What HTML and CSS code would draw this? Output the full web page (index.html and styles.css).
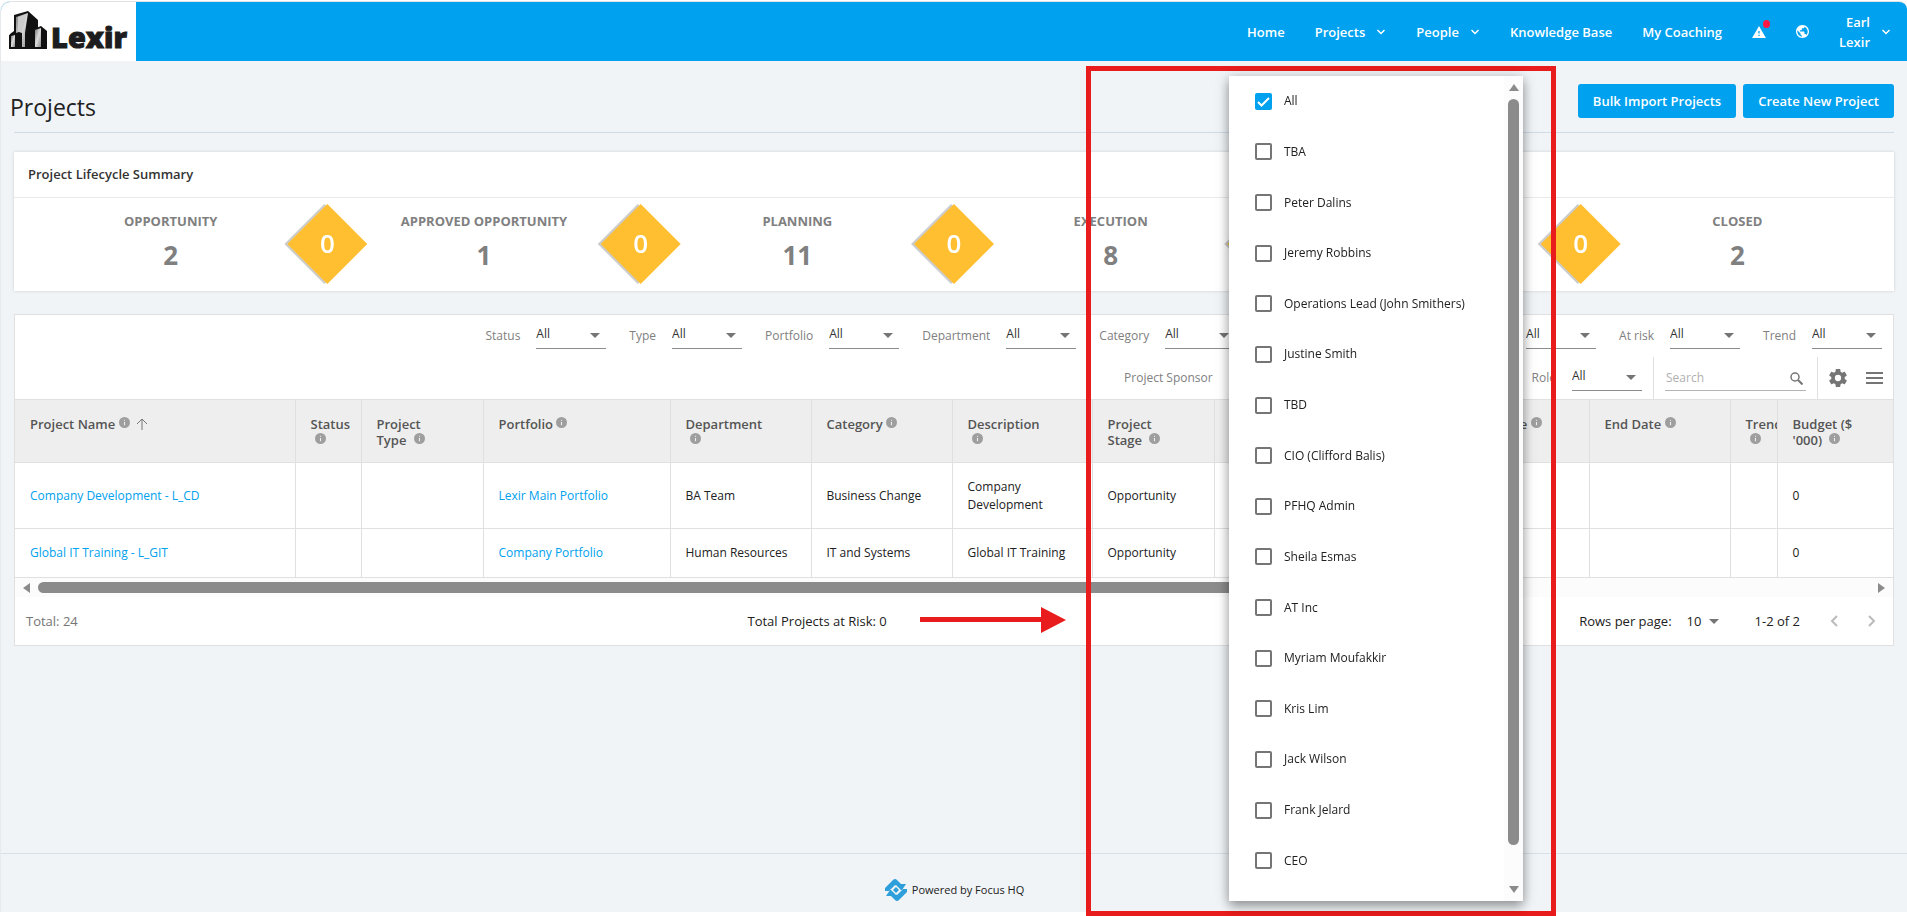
FILE: index.html
```html
<!DOCTYPE html>
<html lang="en">

<head>
  <title>Projects</title>
  <meta charset="utf-8" />
  <link rel="stylesheet" href="styles.css">
</head>

<body>
<svg class="sprite" aria-hidden="true">
  <symbol id="info" viewBox="2 2 20 20">
    <path d="M12 2a10 10 0 1 0 0 20 10 10 0 0 0 0-20zm1 15h-2v-6h2v6zm0-8h-2V7h2v2z" />
  </symbol>
  <symbol id="chevron" viewBox="0 0 10 10">
    <path d="M1.500 3l3.500 3.500L8.500 3" fill="none" stroke="currentColor" stroke-width="1.500" />
  </symbol>
</svg>

<div class="page">
  <header class="topbar">
    <a href="#" class="logo" aria-label="Lexir">
      <svg width="136" height="59" viewBox="0 0 136 59">
        <defs>
          <linearGradient id="steel" x1="0" y1="0" x2="1" y2="1">
            <stop offset="0" stop-color="#777" />
            <stop offset="0.5" stop-color="#ddd" />
            <stop offset="1" stop-color="#888" />
          </linearGradient>
        </defs>
        <path d="M13 13l14-4 10 9v29H9V32l4-3z" fill="#111" />
        <path d="M15 15l12-4-3 20v14h-3V31l-3-1-3 1z" fill="url(#steel)" />
        <path d="M17 15l9-3-5 18-4-1z" fill="#ccc" />
        <path d="M8 33l5-2 3 2v14H8z" fill="#111" />
        <path d="M10 34l4-1v12h-4z" fill="url(#steel)" />
        <path d="M33 27l7-3 6 5v18H33z" fill="#111" />
        <path d="M34 28l6-2v19h-6z" fill="url(#steel)" />
        <text x="50" y="46" class="logo-text">Lexir</text>
      </svg>
    </a>
    <nav class="nav">
      <a href="#">Home</a>
      <a href="#">Projects <svg class="chevron"><use href="#chevron" /></svg></a>
      <a href="#">People <svg class="chevron"><use href="#chevron" /></svg></a>
      <a href="#">Knowledge Base</a>
      <a href="#">My Coaching</a>
      <button class="icon-btn" aria-label="Alerts">
        <svg width="14" height="12" viewBox="1 2 22 19"><path d="M1 21h22L12 2 1 21zm12-3h-2v-2h2v2zm0-4h-2v-4h2v4z" fill="#fff" /></svg>
        <span class="dot"></span>
      </button>
      <button class="icon-btn" aria-label="Language">
        <svg width="13" height="13" viewBox="2 2 20 20"><path d="M12 2C6.480 2 2 6.480 2 12s4.480 10 10 10 10-4.480 10-10S17.520 2 12 2zm-1 17.930c-3.950-.49-7-3.850-7-7.930 0-.62.080-1.210.21-1.790L9 15v1c0 1.100.9 2 2 2v1.930zm6.900-2.540c-.26-.81-1-1.390-1.900-1.390h-1v-3c0-.55-.45-1-1-1H8v-2h2c.55 0 1-.45 1-1V7h2c1.100 0 2-.9 2-2v-.41c2.930 1.190 5 4.060 5 7.410 0 2.080-.8 3.970-2.100 5.390z" fill="#fff" /></svg>
      </button>
      <a href="#" class="user"><span>Earl<br>Lexir</span> <svg class="chevron"><use href="#chevron" /></svg></a>
    </nav>
  </header>

  <main>
    <div class="heading">
      <h1>Projects</h1>
      <div class="actions">
        <button>Bulk Import Projects</button>
        <button>Create New Project</button>
      </div>
    </div>

    <section class="summary">
      <h2>Project Lifecycle Summary</h2>
      <ul class="stages">
        <li><h3>OPPORTUNITY</h3><strong>2</strong><span class="gate"><b>0</b></span></li>
        <li><h3>APPROVED OPPORTUNITY</h3><strong>1</strong><span class="gate"><b>0</b></span></li>
        <li><h3>PLANNING</h3><strong>11</strong><span class="gate"><b>0</b></span></li>
        <li><h3>EXECUTION</h3><strong>8</strong><span class="gate"><b>0</b></span></li>
        <li><h3>CLOSING</h3><strong>1</strong><span class="gate"><b>0</b></span></li>
        <li><h3>CLOSED</h3><strong>2</strong></li>
      </ul>
    </section>

    <section class="grid">
      <div class="filters">
        <label>Status <select><option>All</option></select></label>
        <label>Type <select><option>All</option></select></label>
        <label>Portfolio <select><option>All</option></select></label>
        <label>Department <select><option>All</option></select></label>
        <label>Category <select><option>All</option></select></label>
        <label>Project Stage <select><option>All</option></select></label>
        <label>Budget Type <select><option>All</option></select></label>
        <label>At risk <select><option>All</option></select></label>
        <label>Trend <select><option>All</option></select></label>
      </div>
      <div class="filters tools">
        <label>Project Sponsor <select><option>All</option></select></label>
        <label>Portfolio Manager <select><option>All</option></select></label>
        <label>Role <select><option>All</option></select></label>
        <div class="search">
          <input type="text" placeholder="Search" aria-label="Search">
          <svg width="13" height="13" viewBox="0 0 13 13"><g fill="none" stroke="#757575"><circle cx="5" cy="5" r="4" stroke-width="1.500" /><path d="M8 8l4.500 4.500" stroke-width="2" /></g></svg>
        </div>
        <div class="tool-buttons">
          <button aria-label="Settings">
            <svg width="18" height="18" viewBox="2 2 20 20"><path fill="#757575" d="M19.430 12.980c.04-.32.070-.64.070-.98s-.03-.66-.07-.98l2.110-1.650c.19-.15.240-.42.120-.64l-2-3.460c-.12-.22-.39-.3-.61-.22l-2.490 1c-.52-.4-1.080-.73-1.690-.98l-.38-2.650C14.460 2.180 14.250 2 14 2h-4c-.25 0-.46.180-.49.420l-.38 2.650c-.61.250-1.170.590-1.690.980l-2.490-1c-.23-.09-.49 0-.61.220l-2 3.460c-.13.220-.07.490.120.640l2.110 1.650c-.04.320-.07.650-.07.980s.03.660.070.980l-2.110 1.650c-.19.150-.24.420-.12.640l2 3.460c.12.220.39.300.61.220l2.490-1c.52.400 1.080.730 1.690.980l.38 2.650c.03.240.24.420.49.420h4c.25 0 .46-.18.490-.42l.38-2.650c.61-.25 1.170-.59 1.690-.98l2.490 1c.23.090.49 0 .61-.22l2-3.460c.12-.22.070-.49-.12-.64l-2.110-1.650zM12 15.500a3.500 3.500 0 1 1 0-7 3.500 3.500 0 0 1 0 7z" /></svg>
          </button>
          <button aria-label="Menu">
            <svg width="17" height="12" viewBox="0 0 17 12"><path d="M0 1h17M0 6h17M0 11h17" stroke="#757575" stroke-width="2" /></svg>
          </button>
        </div>
      </div>

      <table>
        <colgroup>
          <col class="w280"><col class="w66"><col class="w122"><col class="w187"><col class="w141"><col class="w141">
          <col class="w140"><col class="w122"><col><col class="w141"><col class="w141"><col class="w47"><col class="w116">
        </colgroup>
        <thead>
          <tr>
            <th>Project Name <svg class="info"><use href="#info" /></svg> <svg class="sort" viewBox="0 0 12 12"><path d="M6 12V1M1 6l5-5 5 5" /></svg></th>
            <th>Status<br><svg class="info"><use href="#info" /></svg></th>
            <th>Project<br>Type <svg class="info"><use href="#info" /></svg></th>
            <th>Portfolio <svg class="info"><use href="#info" /></svg></th>
            <th>Department<br><svg class="info"><use href="#info" /></svg></th>
            <th>Category <svg class="info"><use href="#info" /></svg></th>
            <th>Description<br><svg class="info"><use href="#info" /></svg></th>
            <th>Project<br>Stage <svg class="info"><use href="#info" /></svg></th>
            <th></th>
            <th>Start Date <svg class="info"><use href="#info" /></svg></th>
            <th>End Date <svg class="info"><use href="#info" /></svg></th>
            <th>Trend<br><svg class="info"><use href="#info" /></svg></th>
            <th>Budget ($<br>'000) <svg class="info"><use href="#info" /></svg></th>
          </tr>
        </thead>
        <tbody>
          <tr>
            <td><a href="#">Company Development - L_CD</a></td><td></td><td></td>
            <td><a href="#">Lexir Main Portfolio</a></td>
            <td>BA Team</td><td>Business Change</td><td>Company Development</td><td>Opportunity</td>
            <td></td><td></td><td></td><td></td><td>0</td>
          </tr>
          <tr>
            <td><a href="#">Global IT Training - L_GIT</a></td><td></td><td></td>
            <td><a href="#">Company Portfolio</a></td>
            <td>Human Resources</td><td>IT and Systems</td><td>Global IT Training</td><td>Opportunity</td>
            <td></td><td></td><td></td><td></td><td>0</td>
          </tr>
        </tbody>
      </table>

      <div class="hscroll">
        <span class="arrow-left"></span>
        <div class="htrack"><div class="hthumb"></div></div>
        <span class="arrow-right"></span>
      </div>

      <div class="grid-footer">
        <span class="total">Total: 24</span>
        <span class="risk">Total Projects at Risk: 0</span>
        <div class="pager">
          <label>Rows per page: <select><option>10</option></select></label>
          <span>1-2 of 2</span>
          <button aria-label="Previous page"><svg width="8" height="12" viewBox="0 0 8 12"><path d="M7 1L2 6l5 5" /></svg></button>
          <button aria-label="Next page"><svg width="8" height="12" viewBox="0 0 8 12"><path d="M1 1l5 5-5 5" /></svg></button>
        </div>
      </div>
    </section>
  </main>

  <footer class="footer">
    <svg width="24" height="24" viewBox="0 0 24 24">
      <path d="M1 13v-3l8-8q2-2 4 0l4 4h5l-4 6h-3l-4-5-6 6z" fill="#2f9fdc" />
      <path d="M23 11v3l-8 8q-2 2-4 0l-4-4H2l4-6h3l4 5 6-6z" fill="#2f9fdc" />
      <path d="M12 7l5 5-5 5-5-5z" fill="#f0f4f7" />
      <path d="M12 9l3 3-3 3-3-3z" fill="#2f9fdc" />
    </svg>
    <span>Powered by Focus HQ</span>
  </footer>
</div>

<!-- open sponsor drop-down -->
<div class="menu">
  <div class="options">
    <label><input type="checkbox" checked> All</label>
    <label><input type="checkbox"> TBA</label>
    <label><input type="checkbox"> Peter Dalins</label>
    <label><input type="checkbox"> Jeremy Robbins</label>
    <label><input type="checkbox"> Operations Lead (John Smithers)</label>
    <label><input type="checkbox"> Justine Smith</label>
    <label><input type="checkbox"> TBD</label>
    <label><input type="checkbox"> CIO (Clifford Balis)</label>
    <label><input type="checkbox"> PFHQ Admin</label>
    <label><input type="checkbox"> Sheila Esmas</label>
    <label><input type="checkbox"> AT Inc</label>
    <label><input type="checkbox"> Myriam Moufakkir</label>
    <label><input type="checkbox"> Kris Lim</label>
    <label><input type="checkbox"> Jack Wilson</label>
    <label><input type="checkbox"> Frank Jelard</label>
    <label><input type="checkbox"> CEO</label>
  </div>
  <div class="vscroll">
    <span class="arrow-up"></span>
    <div class="vthumb"></div>
    <span class="arrow-down"></span>
  </div>
</div>

<!-- annotations -->
<div class="mark"></div>
<svg class="mark-arrow" width="146" height="26" viewBox="0 0 146 26"><path d="M0 10h121V0l25 13-25 13V15H0z" fill="#e81c1c" /></svg>
</body>

</html>
```

FILE: styles.css
```css
* {
  margin: 0;
  padding: 0;
  box-sizing: border-box;
}

body {
  background: #fff;
  font: 12px/18px "Open Sans", "Noto Sans", sans-serif;
  color: #212121;
}

a {
  color: #00a1ee;
  text-decoration: none;
}

button,
input,
select {
  font: inherit;
  color: inherit;
  border: 0;
  background: none;
}

ul {
  list-style: none;
}

.sprite {
  position: absolute;
  width: 0;
  height: 0;
}

.page {
  display: flex;
  flex-direction: column;
  min-height: calc(100vh - 5px);
  margin-top: 1px;
  border-top: 1px solid #dfe3e6;
  border-left: 1px solid #e6eaed;
  border-radius: 10px 8px 0 0;
  background: #f0f4f7;
  overflow: hidden;
}

/* top bar */
.topbar {
  display: flex;
  justify-content: space-between;
  height: 59px;
  background: #00a1ee;
}

.logo {
  width: 135px;
  background: #fff;
}

.logo-text {
  font-size: 29px;
  font-weight: 800;
  fill: #1d1d20;
  stroke: #1d1d20;
  stroke-width: 1px;
}

.nav {
  display: flex;
  align-items: center;
  gap: 30px;
  padding-right: 16px;
  font-size: 13px;
  line-height: 20px;
  font-weight: 600;
}

.nav a {
  display: flex;
  align-items: center;
  gap: 11px;
  color: #fff;
}

.chevron {
  width: 10px;
  height: 10px;
}

.icon-btn {
  position: relative;
  display: flex;
}

.dot {
  position: absolute;
  top: -6px;
  right: -4px;
  width: 7px;
  height: 8px;
  border-radius: 50%;
  background: #ff1744;
}

.nav .user {
  text-align: right;
}

/* page heading */
main {
  flex: 1;
  padding: 0 13px;
}

.heading {
  display: flex;
  justify-content: space-between;
  height: 72px;
  padding-top: 23px;
  border-bottom: 1px solid #cfdce7;
}

.heading h1 {
  margin-left: -4px;
  font-size: 23px;
  line-height: 46px;
  font-weight: 400;
}

.actions {
  display: flex;
  align-items: flex-start;
  gap: 7px;
}

.actions button {
  height: 34px;
  padding: 0 15px;
  border-radius: 3px;
  background: #00a1ee;
  color: #fff;
  font-size: 13px;
  font-weight: 600;
}

/* lifecycle summary */
.summary {
  margin-top: 19px;
  background: #fff;
  box-shadow: 0 0 3px rgba(0, 0, 0, 0.15);
}

.summary h2 {
  padding: 0 14px;
  border-bottom: 1px solid #e8eaec;
  font-size: 13px;
  line-height: 45px;
  font-weight: 600;
  color: #333;
}

.stages {
  display: grid;
  grid-template-columns: repeat(6, 1fr);
  height: 93px;
}

.stages li {
  position: relative;
  padding-top: 13px;
  text-align: center;
  color: #808080;
}

.stages h3 {
  font-size: 13px;
  line-height: 20px;
  font-weight: 700;
}

.stages strong {
  display: block;
  font-size: 26px;
  line-height: 48px;
}

.gate {
  position: absolute;
  top: 6px;
  right: -40px;
  z-index: 1;
  width: 80px;
  height: 80px;
  filter: drop-shadow(-3px 0 0 #ccc);
}

.gate b {
  display: block;
  clip-path: polygon(50% 0, 100% 50%, 50% 100%, 0 50%);
  background: #ffbf30;
  color: #fff;
  font-size: 26px;
  line-height: 78px;
  height: 80px;
  font-weight: 600;
}

/* project grid */
.grid {
  margin-top: 23px;
  border: 1px solid #e0e0e0;
  background: #fff;
}

.filters {
  display: flex;
  justify-content: flex-end;
  align-items: center;
  gap: 23px;
  height: 42px;
  padding-right: 11px;
  color: #808080;
}

.filters label {
  display: flex;
  align-items: center;
  gap: 16px;
  white-space: nowrap;
}

select {
  appearance: none;
  background: url("data:image/svg+xml,%3Csvg xmlns='http://www.w3.org/2000/svg' width='10' height='5'%3E%3Cpath d='M0 0h10L5 5z' fill='%23757575'/%3E%3C/svg%3E") no-repeat right 6px center;
}

.filters select {
  width: 70px;
  height: 26px;
  padding-bottom: 3px;
  border-bottom: 1px solid #8c8c8c;
  color: #333;
}

.tools {
  padding-right: 10px;
}

.search,
.tool-buttons {
  display: flex;
  align-items: center;
  height: 42px;
  border-left: 1px solid #e0e0e0;
}

.search {
  margin-left: -12px;
  padding-left: 11px;
}

.search input {
  width: 141px;
  height: 26px;
  padding: 0 30px 0 1px;
  border-bottom: 1px solid #b5b5b5;
}

.search input::placeholder {
  color: #b0b0b0;
}

.search svg {
  margin-left: -16px;
  margin-right: 3px;
}

.tool-buttons {
  gap: 19px;
  margin-left: -12px;
  padding-left: 11px;
}

.tool-buttons button {
  display: flex;
}

table {
  width: 100%;
  table-layout: fixed;
  border-collapse: collapse;
}

.w280 { width: 280px; }
.w187 { width: 187px; }
.w141 { width: 141px; }
.w140 { width: 140px; }
.w122 { width: 122px; }
.w116 { width: 116px; }
.w66 { width: 66px; }
.w47 { width: 47px; }

th,
td {
  padding: 0 0 0 15px;
  border: 1px solid #e0e0e0;
  text-align: left;
  overflow: hidden;
}

th:first-child,
td:first-child {
  border-left: 0;
}

th:last-child,
td:last-child {
  border-right: 0;
}

th {
  height: 63px;
  padding-top: 16px;
  background: #eee;
  font-size: 13px;
  font-weight: 600;
  line-height: 16px;
  vertical-align: top;
  color: #555;
}

td {
  height: 49px;
  padding-right: 12px;
}

tbody tr:first-child td {
  height: 66px;
}

.info {
  width: 11px;
  height: 11px;
  vertical-align: 1px;
  fill: #9e9e9e;
}

br + .info {
  margin-left: 4px;
}

.sort {
  width: 12px;
  height: 12px;
  margin-left: 3px;
  vertical-align: -1px;
  fill: none;
  stroke: #757575;
}

.hscroll {
  display: flex;
  align-items: center;
  gap: 8px;
  height: 19px;
  padding: 0 8px;
  background: #fcfcfc;
}

.htrack {
  flex: 1;
}

.hthumb {
  width: 75%;
  height: 11px;
  border-radius: 6px;
  background: #8b8b8b;
}

.arrow-left,
.arrow-right {
  border: 5px solid transparent;
}

.arrow-left {
  border-left: 0;
  border-right: 7px solid #8b8b8b;
}

.arrow-right {
  border-right: 0;
  border-left: 7px solid #8b8b8b;
}

.grid-footer {
  display: flex;
  align-items: center;
  height: 48px;
  padding: 0 17px 0 11px;
  font-size: 13px;
}

.grid-footer span {
  white-space: nowrap;
}

.total {
  width: 39%;
  color: #757575;
}

.pager {
  display: flex;
  align-items: center;
  margin-left: auto;
}

.pager label {
  display: flex;
  gap: 15px;
}

.pager select {
  width: 32px;
  margin-right: 36px;
  background-position: right center;
}

.pager button {
  display: flex;
  margin-left: 30px;
  fill: none;
  stroke: #bbb;
  stroke-width: 2;
}

/* page footer */
.footer {
  display: flex;
  justify-content: center;
  align-items: center;
  gap: 4px;
  height: 59px;
  padding-top: 14px;
  border-top: 1px solid #d7e1ea;
  font-size: 11px;
}

/* drop-down menu */
.menu {
  position: fixed;
  top: 76px;
  bottom: 15px;
  right: 384px;
  z-index: 5;
  display: flex;
  width: 294px;
  background: #fff;
  box-shadow: 0 5px 10px rgba(0, 0, 0, 0.3), 0 2px 14px rgba(0, 0, 0, 0.2);
}

.options {
  flex: 1;
  display: grid;
  grid-auto-rows: 1fr;
  padding-bottom: 15px;
}

.options label {
  display: flex;
  align-items: center;
  gap: 12px;
  padding-left: 26px;
}

.options input {
  appearance: none;
  width: 17px;
  height: 17px;
  border: 2px solid #757575;
  border-radius: 2px;
}

.options input:checked {
  border-color: #00a1ee;
  background: #00a1ee url("data:image/svg+xml,%3Csvg xmlns='http://www.w3.org/2000/svg' width='13' height='13'%3E%3Cpath d='M1 7l3.500 3.500L12 3' fill='none' stroke='white' stroke-width='2'/%3E%3C/svg%3E") center no-repeat;
}

.vscroll {
  display: flex;
  flex-direction: column;
  align-items: center;
  width: 19px;
  padding: 8px 0;
  background: #fcfcfc;
}

.vthumb {
  flex: 1;
  width: 11px;
  margin: 8px 0 41px;
  border-radius: 6px;
  background: #8b8b8b;
}

.arrow-up,
.arrow-down {
  border: 5px solid transparent;
}

.arrow-up {
  border-top: 0;
  border-bottom: 7px solid #8b8b8b;
}

.arrow-down {
  border-bottom: 0;
  border-top: 7px solid #8b8b8b;
}

/* annotations */
.mark {
  position: fixed;
  top: 66px;
  bottom: 0;
  right: 351px;
  z-index: 4;
  width: 470px;
  border: 5px solid #e81c1c;
  pointer-events: none;
}

.mark-arrow {
  position: fixed;
  top: 607px;
  right: 841px;
}
```
